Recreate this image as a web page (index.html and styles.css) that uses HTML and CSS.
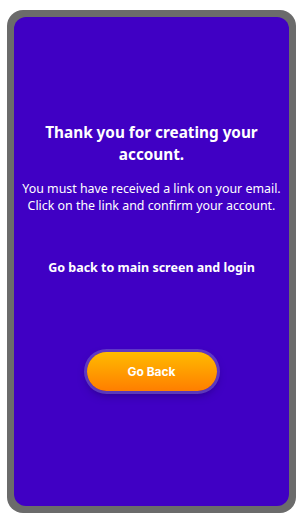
FILE: index.html
```html
<!DOCTYPE html>
<html>
<head>
<meta charset="utf-8">
<link rel="stylesheet" href="styles.css">
</head>
<body>
<div class="frame">
  <div class="screen">
    <h1 class="title">Thank you for creating your account.</h1>
    <p class="text">You must have received a link on your email. Click on the link and confirm your account.</p>
    <p class="sub">Go back to main screen and login</p>
    <button class="btn">Go Back</button>
  </div>
</div>
</body>
</html>
```
FILE: styles.css
```css
html, body { margin: 0; padding: 0; background: #fff; }
body { width: 300px; height: 522px; padding: 10px 4px 9px 7px; box-sizing: border-box; }
.frame {
  width: 289px; height: 503px; box-sizing: border-box;
  background: #6b6b6b; border-radius: 16px; padding: 7px;
}
.screen {
  height: 100%; background: #4000c4; border-radius: 12px;
  display: flex; flex-direction: column; align-items: center;
  font-family: "Noto Sans", sans-serif; color: #fff; text-align: center;
  padding-top: 104px; box-sizing: border-box;
}
.title { margin: 0; font-size: 15.3px; font-weight: 700; line-height: 22px; width: 230px; }
.text { margin: 15px 0 0; font-size: 12.4px; line-height: 17px; width: 275px; }
.sub { margin: 45px 0 0; font-size: 12.5px; font-weight: 700; line-height: 18px; }
.btn {
  margin-top: 75px; width: 130px; height: 39px; border: none; border-radius: 20px;
  background: linear-gradient(#ffbb00, #ff7e00); color: #fff;
  font-family: Inter, sans-serif; font-weight: 700; font-size: 12px;
  box-shadow: 0 0 0 3px rgba(110, 80, 200, 0.7), 0 4px 8px rgba(20, 0, 80, 0.5);
}
```
